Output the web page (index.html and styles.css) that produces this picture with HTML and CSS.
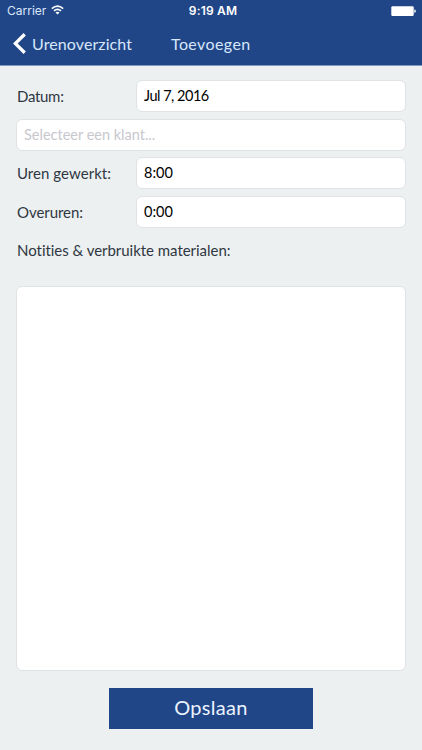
FILE: index.html
```html
<!DOCTYPE html>
<html lang="nl">
<head>
<meta charset="utf-8">
<title>Toevoegen</title>
<link rel="stylesheet" href="styles.css">
</head>
<body>
<header class="top">
  <div class="status">
    <div class="carrier"><span>Carrier</span>
      <svg class="wifi" width="13" height="10" viewBox="0 0 13 10" fill="none" stroke="#fff" stroke-width="1.6"><path d="M.8 3.6Q6.5-1.3 12.2 3.6M3 5.9Q6.5 3 10 5.9"/><path d="M6.5 9.4 4.5 7.4Q6.5 5.9 8.5 7.4Z" fill="#fff" stroke="none"/></svg>
    </div>
    <div class="time">9:19 AM</div>
    <svg class="battery" width="25" height="11" viewBox="0 0 25 11"><rect x=".3" y=".3" width="22.4" height="9.7" rx="1.2" fill="#fff"/><path d="M23.3 3.5h.5q1 0 1 1.6t-1 1.6h-.5z" fill="#fff"/></svg>
  </div>
  <nav class="nav">
    <a class="back"><svg width="13" height="21" viewBox="0 0 13 21" fill="none" stroke="#fff" stroke-width="3.3"><path d="M11.7 1.3 2.3 10.5 11.7 19.7"/></svg><span class="back-text">Urenoverzicht</span></a>
    <h1 class="title">Toevoegen</h1>
  </nav>
</header>
<main class="form">
  <div class="row"><label class="label datum">Datum:</label><div class="field date">Jul 7, 2016</div></div>
  <div class="row"><div class="field placeholder">Selecteer een klant...</div></div>
  <div class="row"><label class="label uren">Uren gewerkt:</label><div class="field">8:00</div></div>
  <div class="row"><label class="label overuren">Overuren:</label><div class="field">0:00</div></div>
  <label class="notes-label">Notities &amp; verbruikte materialen:</label>
  <div class="notes"></div>
  <button class="save">Opslaan</button>
</main>
</body>
</html>
```
FILE: styles.css
```css
* { box-sizing: border-box; }
body { margin: 0; height: 750px; background: #ecf0f1; font-family: Lato, sans-serif; font-size: 15px; color: #2f3742; overflow: hidden; }
.top { height: 66px; background: #204687; color: #fff; border-bottom: 1px solid #8299c0; }
.status { height: 22px; padding: 0 6px 0 7px; display: grid; grid-template-columns: 1fr auto 1fr; align-items: center; font: 12px/22px Inter, sans-serif; }
.carrier { display: flex; align-items: center; gap: 5px; color: #dce7fa; letter-spacing: 0; }
.wifi { margin-top: -2px; }
.time { font-weight: 600; letter-spacing: .2px; padding-left: 3px; }
.battery { justify-self: end; }
.nav { height: 43px; display: grid; grid-template-columns: 158px 1fr; align-items: center; padding-left: 13px; color: #d8e6fb; }
.back { display: flex; align-items: center; gap: 6px; }
.back-text, .title { font-size: 16px; line-height: 20px; font-weight: 400; letter-spacing: .1px; }
.title { margin: 0; letter-spacing: .4px; }
.form { padding: 14px 16px 0; display: flex; flex-direction: column; }
.row { display: flex; height: 32px; margin-bottom: 6.7px; align-items: center; }
.label { width: 120px; padding-left: 1px; letter-spacing: .05px; }
.datum { letter-spacing: -.3px; }
.overuren { letter-spacing: -.05px; }
.field { flex: 1; height: 32px; background: #fff; border: 1px solid #dfe3e5; border-radius: 6px; padding: 0 7px; line-height: 29px; font-size: 14.5px; color: #000; }
.date { letter-spacing: -.5px; }
.placeholder { color: #c7c7cd; }
.notes-label { padding-left: 1px; height: 51px; line-height: 31px; letter-spacing: -.03px; }
.notes { height: 385px; background: #fff; border: 1px solid #dfe3e5; border-radius: 6px; }
.save { align-self: center; width: 204px; height: 41px; margin-top: 17px; padding: 0 0 3px; border: 1px solid #204687; background: #204687; color: #eaf3ff; font: 20px/36px Lato, sans-serif; letter-spacing: .3px; }
```
